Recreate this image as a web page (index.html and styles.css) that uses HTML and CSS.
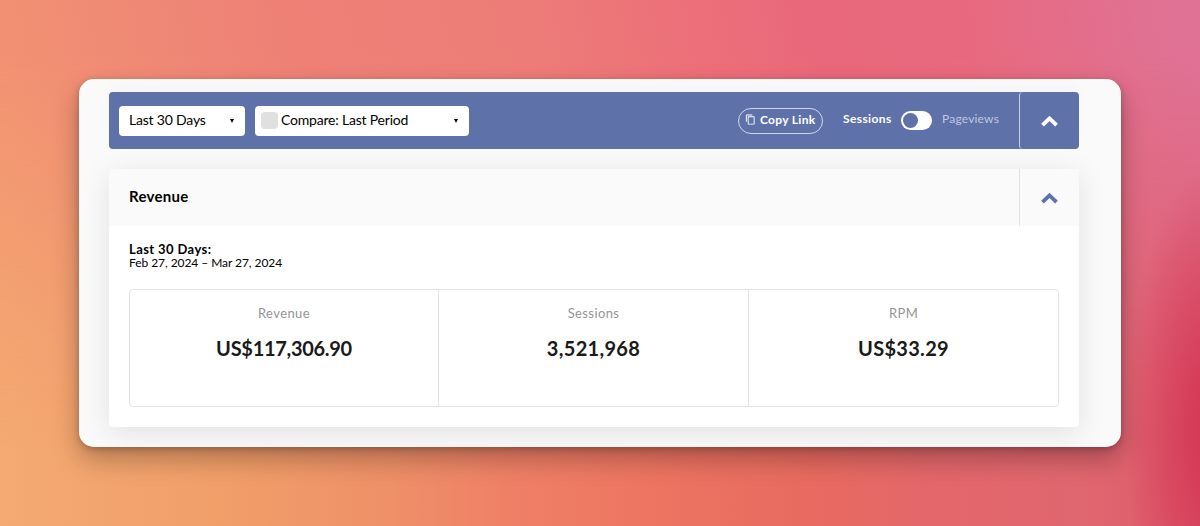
FILE: index.html
```html
<!DOCTYPE html>
<html lang="en">
<head>
    <meta charset="UTF-8">
    <meta name="viewport" content="width=device-width, initial-scale=1.0">
    <title>Revenue</title>
    <link rel="stylesheet" href="styles.css">
</head>
<body>
    <main class="window">
        <header class="toolbar">
            <button class="select select-range">
                <span class="range-text">Last 30 Days</span>
                <span class="caret"></span>
            </button>
            <button class="select select-compare">
                <span class="check"></span>
                <span class="compare-text">Compare: Last Period</span>
                <span class="caret"></span>
            </button>
            <button class="copy-link">
                <svg class="copy-icon" viewBox="0 0 24 24" fill="currentColor">
                    <path d="M16 1H4C2.900 1 2 1.900 2 3v14h2V3h12V1zm3 4H8C6.900 5 6 5.900 6 7v14c0 1.100.9 2 2 2h11c1.100 0 2-.9 2-2V7c0-1.100-.9-2-2-2zm0 16H8V7h11v14z"/>
                </svg>
                <span>Copy Link</span>
            </button>
            <div class="metric">
                <span class="metric-on">Sessions</span>
                <span class="switch"></span>
                <span class="metric-off">Pageviews</span>
            </div>
            <button class="collapse">
                <svg class="chevron" viewBox="0 0 17 12"><path d="M1.500 10.200 8.500 3.300 15.500 10.200"/></svg>
            </button>
        </header>

        <section class="panel">
            <div class="panel-head">
                <h2>Revenue</h2>
                <button class="collapse collapse-light">
                    <svg class="chevron" viewBox="0 0 17 12"><path d="M1.500 10.200 8.500 3.300 15.500 10.200"/></svg>
                </button>
            </div>
            <div class="panel-body">
                <div class="period">Last 30 Days:</div>
                <div class="dates">Feb 27, 2024 – Mar 27, 2024</div>
                <div class="stats">
                    <div class="stat">
                        <span class="stat-label">Revenue</span>
                        <span class="stat-value stat-value-long">US$117,306.90</span>
                    </div>
                    <div class="stat">
                        <span class="stat-label">Sessions</span>
                        <span class="stat-value">3,521,968</span>
                    </div>
                    <div class="stat">
                        <span class="stat-label">RPM</span>
                        <span class="stat-value">US$33.29</span>
                    </div>
                </div>
            </div>
        </section>
    </main>
</body>
</html>
```
FILE: styles.css
```css
* {
    box-sizing: border-box;
}
body {
    margin: 0;
    height: 526px;
    padding: 79px 79px 0;
    overflow: hidden;
    font-family: Lato, "Open Sans", sans-serif;
    color: #000;
    background:
        linear-gradient(90deg, #f4aa72 0%, #f19e69 19%, #ee8f68 33%, #ef7f66 43%, #ec7461 55%, #e86a60 68%, #e3676b 78%, #e0666f 90%, #dc5b6c 100%);
}
button {
    font: inherit;
    border: none;
    padding: 0;
}
/* upper half of the backdrop, fades into the body gradient */
body::after {
    content: "";
    position: absolute;
    z-index: -2;
    top: 0;
    left: 0;
    width: 1200px;
    height: 526px;
    background: linear-gradient(80deg, #f39670 0%, #ef8a75 16%, #ee8076 30%, #ed7c78 48%, #ec7079 60%, #e9687c 70%, #e8697e 81%, #e17090 94%, #df7397 100%);
    mask-image: linear-gradient(#000 10%, transparent 85%);
}
/* shadow of the window */
body::before {
    content: "";
    position: absolute;
    z-index: -1;
    top: 79px;
    left: 79px;
    width: 1042px;
    height: 368px;
    border-radius: 15px;
    box-shadow: 0 12px 26px rgba(0, 0, 0, 0.28), 0 2px 6px rgba(0, 0, 0, 0.22);
}
/* red glow at the right edge */
html::before {
    content: "";
    position: absolute;
    z-index: -1;
    top: 0;
    left: 1100px;
    width: 100px;
    height: 526px;
    background: radial-gradient(ellipse 85px 260px at 110px 430px, #d53a57 15%, rgba(217, 58, 90, 0));
}
.window {
    width: 1042px;
    height: 368px;
    padding: 13px 42px 0 30px;
    background-color: #fafafa;
    border-radius: 15px;
    overflow: hidden;
}
.toolbar {
    display: flex;
    align-items: center;
    height: 57px;
    padding-left: 10px;
    background-color: #5f71a9;
    border-radius: 4px;
    box-shadow: 0 -8px 16px rgba(0, 0, 0, 0.02);
}
.select {
    display: flex;
    align-items: center;
    height: 30px;
    background-color: #fff;
    border-radius: 4px;
    color: #000;
    font-size: 14px;
    letter-spacing: -0.2px;
}
.select-range {
    width: 126px;
    padding: 0 11px 0 10px;
}
.select-compare {
    width: 214px;
    margin-left: 10px;
    padding: 0 11px 0 6px;
}
.range-text,
.compare-text {
    padding-bottom: 2px;
}
.check {
    width: 17px;
    height: 17px;
    margin-right: 3px;
    background-color: #e0e0e0;
    border-radius: 4px;
}
.caret {
    margin-left: auto;
    border: 2.5px solid transparent;
    border-top: 4px solid #000;
    border-bottom: 0;
}
.copy-link {
    display: flex;
    align-items: center;
    width: 85px;
    height: 26px;
    margin-left: auto;
    padding: 0 0 2px 6px;
    background: none;
    border: 1px solid #cfd8f2;
    border-radius: 13px;
    color: #fff;
    font-size: 12px;
    font-weight: bold;
    letter-spacing: 0.3px;
    white-space: nowrap;
}
.copy-icon {
    width: 11px;
    height: 11px;
    margin-right: 4px;
}
.metric {
    display: flex;
    align-items: center;
    margin: 0 19px 0 20px;
    color: #fff;
    font-size: 12px;
}
.metric-on,
.metric-off {
    width: 58px;
    padding-bottom: 4px;
}
.metric-on {
    font-weight: bold;
    letter-spacing: 0.4px;
}
.metric-off {
    color: #bfc7de;
    letter-spacing: 0.2px;
}
.switch {
    width: 31px;
    height: 19px;
    margin-right: 10px;
    padding: 2px;
    background-color: #fff;
    border-radius: 10px;
}
.switch::before {
    content: "";
    display: block;
    width: 15px;
    height: 15px;
    background-color: #5f71a9;
    border-radius: 50%;
}
.collapse {
    display: flex;
    align-items: center;
    justify-content: center;
    width: 60px;
    height: 57px;
    background: none;
    border-left: 1px solid #c8d0e8;
    border-radius: 4px;
    color: #fff;
}
.chevron {
    width: 17px;
    height: 12px;
    margin-right: 1px;
    fill: none;
    stroke: currentColor;
    stroke-width: 3.8;
}
.panel {
    height: 258px;
    margin-top: 20px;
    background-color: #fff;
    border-radius: 4px;
    box-shadow: 0 6px 30px rgba(0, 0, 0, 0.1);
}
.panel-head {
    display: flex;
    align-items: center;
    justify-content: space-between;
    height: 57px;
    padding-left: 20px;
    background-color: #fafafa;
}
.panel-head h2 {
    margin: 0 0 3px;
    font-size: 15px;
    line-height: 18px;
    letter-spacing: 0.3px;
}
.collapse-light {
    border-color: #e2e2e2;
    border-radius: 0;
    color: #5f71a9;
}
.panel-body {
    padding: 17px 20px 0;
}
.period {
    font-size: 13px;
    line-height: 13px;
    font-weight: bold;
    letter-spacing: 0.4px;
}
.dates {
    font-size: 12px;
    line-height: 13px;
    letter-spacing: -0.06px;
}
.stats {
    display: grid;
    grid-template-columns: 308px 310px 1fr;
    height: 118px;
    margin-top: 20px;
    border: 1px solid #e4e4e4;
    border-radius: 4px;
}
.stat {
    display: flex;
    flex-direction: column;
    align-items: center;
    padding-top: 14px;
}
.stat + .stat {
    border-left: 1px solid #e4e4e4;
}
.stat-label {
    color: #949494;
    font-size: 13px;
    line-height: 18px;
    letter-spacing: 0.4px;
}
.stat-value {
    margin-top: 13px;
    color: #1a1a1a;
    font-size: 20px;
    line-height: 26px;
    font-weight: bold;
    letter-spacing: 0.3px;
}
.stat-value-long {
    letter-spacing: -0.3px;
}
```
